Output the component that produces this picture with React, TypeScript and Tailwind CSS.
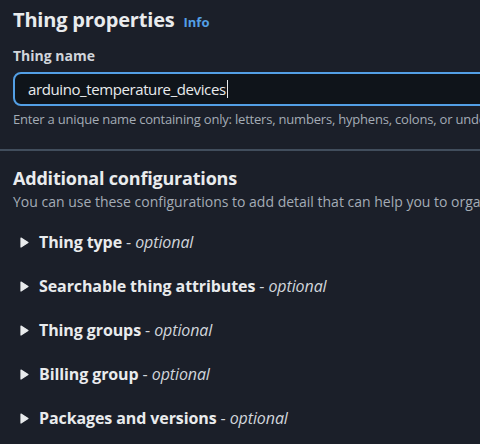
import React from 'react';

const SECTIONS = ['Thing type', 'Searchable thing attributes', 'Thing groups', 'Billing group', 'Packages and versions'];

function Caret() {
  return (
    <svg width="9" height="11" viewBox="0 0 9 11" className="flex-none">
      <path d="M1 1 L8 5.5 L1 10 Z" fill="#e9ebed" stroke="#e9ebed" strokeWidth="1.2" strokeLinejoin="round" />
    </svg>
  );
}

export default function App() {
  return (
    <div className="h-[444px] w-[480px] overflow-hidden bg-[#1b1f29] text-[#d1d5db]" style={{ fontFamily: '"Open Sans", "Noto Sans", sans-serif' }}>
      <div className="px-[13px] pt-[6px]">
        <div className="flex items-baseline gap-[9px]">
          <h2 className="text-[20px] font-bold leading-[28px] tracking-[-0.2px] text-[#e9ebed]">Thing properties</h2>
          <span className="text-[13px] font-bold text-[#539fe5]">Info</span>
        </div>
        <div className="mt-[12px] text-[14px] font-bold leading-[20px] text-[#d1d5db]">Thing name</div>
        <div className="mt-[6px] -mr-[40px] flex h-[34px] items-center rounded-[8px] border-2 border-[#539fe5] bg-[#0f141a] pl-[13px]">
          <span className="text-[15px] tracking-[-0.4px] text-[#e9ebed]">arduino_temperature_devices</span>
          <span className="ml-[1px] h-[18px] w-px bg-[#e9ebed]" />
        </div>
        <div className="mt-[5px] whitespace-nowrap text-[13px] leading-[16px] tracking-[-0.2px] text-[#a4acb6]">
          Enter a unique name containing only: letters, numbers, hyphens, colons, or underscores.
        </div>
      </div>
      <div className="mt-[22px] h-[2px] bg-[#414d5c]" />
      <div className="px-[13px] pt-[15px]">
        <h3 className="text-[18px] font-bold leading-[24px] tracking-[-0.2px] text-[#e9ebed]">Additional configurations</h3>
        <p className="mt-[2px] whitespace-nowrap text-[14px] leading-[20px] text-[#a4acb6]">
          You can use these configurations to add detail that can help you to organize, manage, and search your things.
        </p>
        <div className="mt-[8px] flex flex-col">
          {SECTIONS.map((s) => (
            <div key={s} className="flex h-[44px] items-center gap-[10px] pl-[7px]">
              <Caret />
              <span className="whitespace-nowrap text-[16px] leading-[22px] tracking-[-0.1px]">
                <span className="font-bold text-[#e9ebed]">{s}</span>
                <span className="text-[#d1d5db]"> - </span>
                <span className="italic text-[#d1d5db]">optional</span>
              </span>
            </div>
          ))}
        </div>
      </div>
    </div>
  );
}
